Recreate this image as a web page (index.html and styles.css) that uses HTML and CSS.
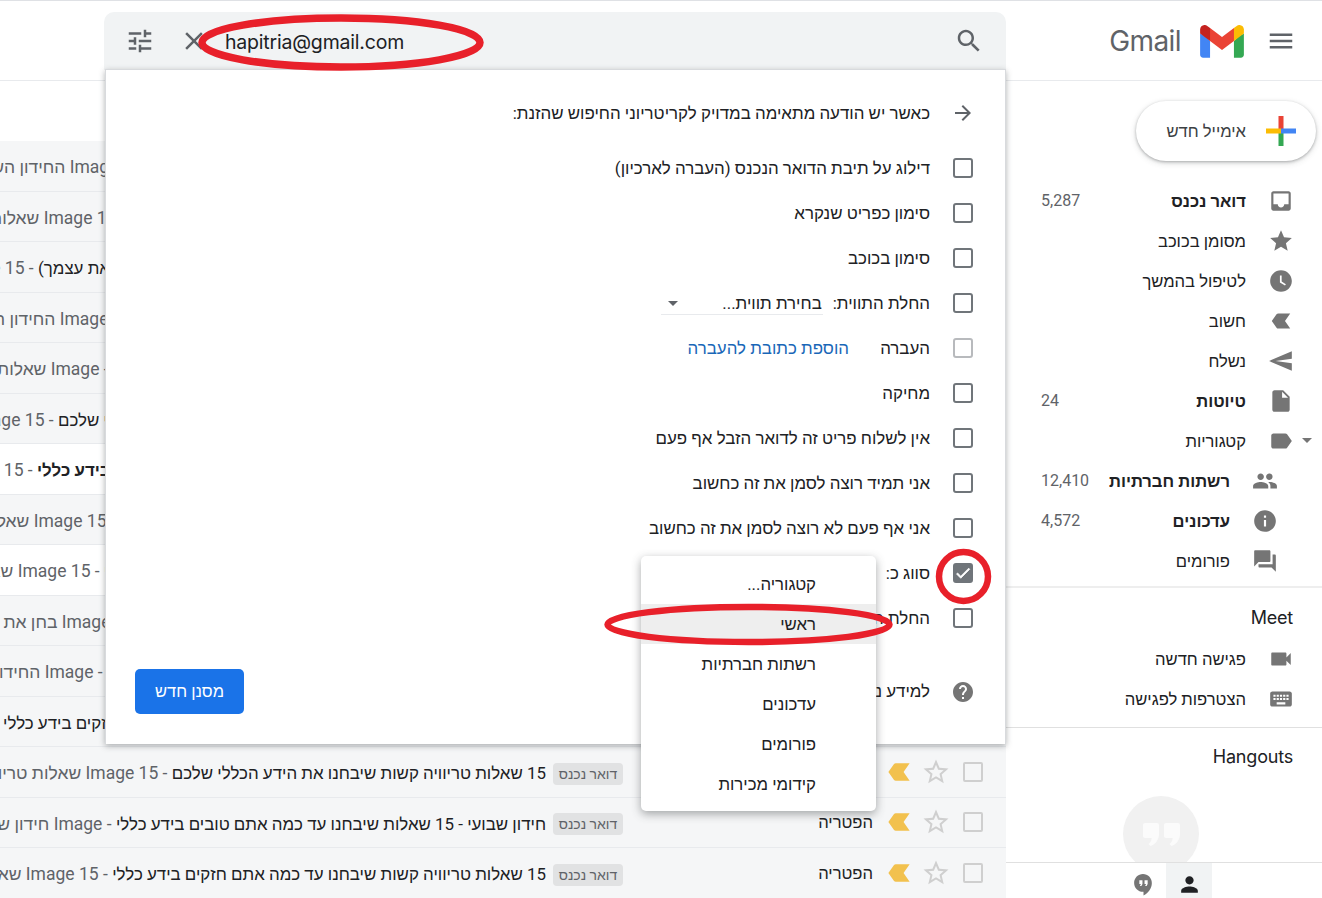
FILE: index.html
```html
<!DOCTYPE html>
<html lang="he" dir="rtl">
<head>
<meta charset="utf-8">
<title>Gmail</title>
<link rel="stylesheet" href="styles.css">
</head>
<body>
<svg class="sprite" xmlns="http://www.w3.org/2000/svg">
  <symbol id="i-star" viewBox="0 0 24 24"><path d="M12 17.27L18.18 21l-1.64-7.03L22 9.24l-7.19-.61L12 2 9.19 8.63 2 9.24l5.46 4.73L5.82 21z"/></symbol>
  <symbol id="i-star-o" viewBox="0 0 24 24"><path d="M22 9.24l-7.19-.62L12 2 9.19 8.63 2 9.24l5.46 4.73L5.82 21 12 17.27 18.18 21l-1.63-7.03L22 9.24zM12 15.4l-3.76 2.27 1-4.28-3.32-2.88 4.38-.38L12 6.1l1.71 4.04 4.38.38-3.32 2.88 1 4.28L12 15.4z"/></symbol>
  <symbol id="i-imp" viewBox="0 0 24 24"><path transform="matrix(-1 0 0 1 24 0)" d="M3.5 18.99l11 .01c.67 0 1.27-.33 1.63-.84L20.5 12l-4.37-6.16c-.36-.51-.96-.84-1.63-.84l-11 .01L8.34 12 3.5 18.99z"/></symbol>
</svg>

<div class="app">
  <header class="header">
    <div class="brand">
      <svg class="icon burger" viewBox="0 0 24 24"><path d="M3 18h18v-2H3v2zm0-5h18v-2H3v2zm0-7v2h18V6H3z"/></svg>
      <svg class="gmail-m" viewBox="0 0 256 193">
        <path fill="#4285f4" d="M58.18 192.05V93.14L27.5 65.08 0 49.51v125.09c0 9.66 7.83 17.45 17.45 17.45h40.73z"/>
        <path fill="#34a853" d="M197.82 192.05h40.73c9.66 0 17.45-7.83 17.45-17.45V49.51l-31.16 17.84-27.02 25.79v98.91z"/>
        <path fill="#ea4335" d="M58.18 93.14l-4.17-38.65 4.17-36.99L128 69.87l69.82-52.36 4.67 34.99-4.67 40.64L128 145.5z"/>
        <path fill="#fbbc04" d="M197.82 17.51V93.14L256 49.51V26.18c0-21.59-24.64-33.89-41.89-20.95l-16.29 12.28z"/>
        <path fill="#c5221f" d="M0 49.51l26.76 20.07L58.18 93.14V17.51L41.89 5.23C24.61-7.71 0 4.59 0 26.18v23.33z"/>
      </svg>
      <span class="wordmark" dir="ltr">Gmail</span>
    </div>
    <div class="search">
      <svg class="icon search-ic" viewBox="0 0 24 24"><path d="M15.5 14h-.79l-.28-.27C15.41 12.59 16 11.11 16 9.5 16 5.91 13.09 3 9.5 3S3 5.91 3 9.5 5.91 16 9.5 16c1.61 0 3.09-.59 4.23-1.57l.27.28v.79l5 4.99L20.49 19l-4.99-5zm-6 0C7.01 14 5 11.99 5 9.5S7.01 5 9.5 5 14 7.01 14 9.5 11.99 14 9.5 14z"/></svg>
      <span class="query" dir="ltr">hapitria@gmail.com</span>
      <svg class="icon close-ic" viewBox="0 0 24 24"><path d="M19 6.41L17.59 5 12 10.59 6.41 5 5 6.41 10.59 12 5 17.59 6.41 19 12 13.41 17.59 19 19 17.59 13.41 12z"/></svg>
      <svg class="icon tune-ic" viewBox="0 0 24 24"><path d="M3 17v2h6v-2H3zM3 5v2h10V5H3zm10 16v-2h8v-2h-8v-2h-2v6h2zM7 9v2H3v2h4v2h2V9H7zm14 4v-2H11v2h10zm-6-4h2V7h4V5h-4V3h-2v6z"/></svg>
    </div>
  </header>

  <div class="content">
    <aside class="sidebar">
      <button class="compose">
        <svg class="plus" viewBox="0 0 30 30">
          <rect x="12.5" y="0" width="5" height="15" fill="#ea4335"/>
          <rect x="12.5" y="15" width="5" height="15" fill="#34a853"/>
          <rect x="0" y="12.5" width="15" height="5" fill="#fbbc04"/>
          <rect x="15" y="12.5" width="15" height="5" fill="#4285f4"/>
        </svg>
        <span class="compose-label">אימייל חדש</span>
      </button>
      <nav class="nav">
        <a class="item strong"><svg class="icon" viewBox="0 0 24 24"><path d="M19 3H5c-1.1 0-2 .9-2 2v14c0 1.1.9 2 2 2h14c1.1 0 2-.9 2-2V5c0-1.1-.9-2-2-2zm0 12h-4c0 1.66-1.35 3-3 3s-3-1.34-3-3H5V5h14v10z"/></svg><span class="label">דואר נכנס</span><span class="count">5,287</span></a>
        <a class="item"><svg class="icon"><use href="#i-star"/></svg><span class="label">מסומן בכוכב</span></a>
        <a class="item"><svg class="icon" viewBox="0 0 24 24"><path d="M11.99 2C6.47 2 2 6.48 2 12s4.47 10 9.99 10C17.52 22 22 17.52 22 12S17.52 2 11.99 2zm3.7 14.2L11 13.4V7h1.6v5.5l3.9 2.4-.8 1.3z"/></svg><span class="label">לטיפול בהמשך</span></a>
        <a class="item"><svg class="icon"><use href="#i-imp"/></svg><span class="label">חשוב</span></a>
        <a class="item"><svg class="icon" viewBox="0 0 24 24"><path transform="matrix(-1 0 0 1 24 0)" d="M2.01 21L23 12 2.01 3 2 10l15 2-15 2z"/></svg><span class="label">נשלח</span></a>
        <a class="item strong"><svg class="icon" viewBox="0 0 24 24"><path d="M6 2c-1.1 0-1.99.9-1.99 2L4 20c0 1.1.89 2 1.99 2H18c1.1 0 2-.9 2-2V8l-6-6H6zm7 7V3.5L18.5 9H13z"/></svg><span class="label">טיוטות</span><span class="count">24</span></a>
        <a class="item"><span class="caret nav-caret"></span><svg class="icon" viewBox="0 0 24 24"><path d="M17.63 5.84C17.27 5.33 16.67 5 16 5L5 5.01C3.9 5.01 3 5.9 3 7v10c0 1.1.9 1.99 2 1.99L16 19c.67 0 1.27-.33 1.63-.84L22 12l-4.37-6.16z"/></svg><span class="label">קטגוריות</span></a>
        <a class="item sub strong"><svg class="icon" viewBox="0 0 24 24"><path d="M16 11c1.66 0 2.99-1.34 2.99-3S17.66 5 16 5c-1.66 0-3 1.34-3 3s1.34 3 3 3zm-8 0c1.66 0 2.99-1.34 2.99-3S9.66 5 8 5C6.34 5 5 6.34 5 8s1.34 3 3 3zm0 2c-2.33 0-7 1.17-7 3.5V19h14v-2.5c0-2.33-4.67-3.5-7-3.5zm8 0c-.29 0-.62.02-.97.05 1.16.84 1.97 1.97 1.97 3.45V19h6v-2.5c0-2.33-4.67-3.5-7-3.5z"/></svg><span class="label">רשתות חברתיות</span><span class="count">12,410</span></a>
        <a class="item sub strong"><svg class="icon" viewBox="0 0 24 24"><path d="M12 2C6.48 2 2 6.48 2 12s4.48 10 10 10 10-4.48 10-10S17.52 2 12 2zm1 15h-2v-6h2v6zm0-8h-2V7h2v2z"/></svg><span class="label">עדכונים</span><span class="count">4,572</span></a>
        <a class="item sub"><svg class="icon" viewBox="0 0 24 24"><path d="M21 6h-2v9H6v2c0 .55.45 1 1 1h11l4 4V7c0-.55-.45-1-1-1zm-4 6V3c0-.55-.45-1-1-1H3c-.55 0-1 .45-1 1v14l4-4h10c.55 0 1-.45 1-1z"/></svg><span class="label">פורומים</span></a>
      </nav>
      <section class="meet">
        <h2 class="side-title" dir="ltr">Meet</h2>
        <a class="item"><svg class="icon" viewBox="0 0 24 24"><path d="M17 10.5V7c0-.55-.45-1-1-1H4c-.55 0-1 .45-1 1v10c0 .55.45 1 1 1h12c.55 0 1-.45 1-1v-3.5l4 4v-11l-4 4z"/></svg><span class="label">פגישה חדשה</span></a>
        <a class="item"><svg class="icon" viewBox="0 0 24 24"><path d="M20 5H4c-1.1 0-1.99.9-1.99 2L2 17c0 1.1.9 2 2 2h16c1.1 0 2-.9 2-2V7c0-1.1-.9-2-2-2zm-9 3h2v2h-2V8zm0 3h2v2h-2v-2zM8 8h2v2H8V8zm0 3h2v2H8v-2zm-1 2H5v-2h2v2zm0-3H5V8h2v2zm9 7H8v-2h8v2zm0-4h-2v-2h2v2zm0-3h-2V8h2v2zm3 3h-2v-2h2v2zm0-3h-2V8h2v2z"/></svg><span class="label">הצטרפות לפגישה</span></a>
      </section>
      <section class="hangouts">
        <h2 class="side-title" dir="ltr">Hangouts</h2>
        <div class="avatar-wrap">
          <div class="avatar">
            <svg class="avatar-q" viewBox="0 0 37 23"><path d="M2 0h12c1.1 0 2 .9 2 2v9c0 5.5-3.5 10.5-8.5 12l-2-2c2-1.5 3-3.5 3.2-6H2c-1.1 0-2-.9-2-2V2C0 .9.9 0 2 0zM23 0h12c1.1 0 2 .9 2 2v9c0 5.5-3.5 10.5-8.5 12l-2-2c2-1.5 3-3.5 3.2-6H23c-1.1 0-2-.9-2-2V2c0-1.1.9-2 2-2z"/></svg>
          </div>
        </div>
      </section>
      <footer class="side-foot">
        <span class="tab active"><svg class="icon" viewBox="0 0 24 24"><path d="M12 12c2.21 0 4-1.79 4-4s-1.79-4-4-4-4 1.79-4 4 1.79 4 4 4zm0 2c-2.67 0-8 1.34-8 4v2h16v-2c0-2.66-5.33-4-8-4z"/></svg></span>
        <span class="tab"><svg class="icon" viewBox="0 0 24 24"><path d="M11.5 2C6.8 2 3 5.8 3 10.5S6.8 19 11.5 19H12v3.5c4.86-2.34 8-7 8-12C20 5.8 16.2 2 11.5 2zM11 11.5l-1 2H8.5l1-2H8V8h3v3.5zm5 0l-1 2h-1.5l1-2H13V8h3v3.5z"/></svg></span>
      </footer>
    </aside>

    <main class="main">
      <div class="toolbar"></div>
      <div class="list">
        <div class="row"><span class="box"></span><svg class="star"><use href="#i-star-o"/></svg><svg class="imp"><use href="#i-imp"/></svg><span class="sender">הפטריה</span><span class="tag">דואר נכנס</span><span class="text"><span class="subj sw-414">החידון השבועי - 15 שאלות שיבחנו עד כמה אתם טובים</span><span class="snip"> - Image החידון השבועי</span></span></div>
        <div class="row"><span class="box"></span><svg class="star"><use href="#i-star-o"/></svg><svg class="imp"><use href="#i-imp"/></svg><span class="sender">הפטריה</span><span class="tag">דואר נכנס</span><span class="text"><span class="subj sw-416">15 שאלות טריוויה קשות שיבחנו את הידע הכללי שלכם</span><span class="snip"> - Image 15 שאלות טריוויה</span></span></div>
        <div class="row"><span class="box"></span><svg class="star"><use href="#i-star-o"/></svg><svg class="imp"><use href="#i-imp"/></svg><span class="sender">הפטריה</span><span class="tag">דואר נכנס</span><span class="text"><span class="subj sw-508">החידון השבועי - 15 שאלות שיבחנו (בחן את עצמך)</span><span class="snip"> - Image 15</span></span></div>
        <div class="row"><span class="box"></span><svg class="star"><use href="#i-star-o"/></svg><svg class="imp"><use href="#i-imp"/></svg><span class="sender">הפטריה</span><span class="tag">דואר נכנס</span><span class="text"><span class="subj sw-424">החידון השבועי - 15 שאלות שיבחנו עד כמה אתם חזקים</span><span class="snip"> - Image החידון השבועי</span></span></div>
        <div class="row"><span class="box"></span><svg class="star"><use href="#i-star-o"/></svg><svg class="imp"><use href="#i-imp"/></svg><span class="sender">הפטריה</span><span class="tag">דואר נכנס</span><span class="text"><span class="subj sw-433">15 שאלות טריוויה קשות שיבחנו את הידע הכללי שלכם</span><span class="snip"> - Image שאלות טריוויה</span></span></div>
        <div class="row"><span class="box"></span><svg class="star"><use href="#i-star-o"/></svg><svg class="imp"><use href="#i-imp"/></svg><span class="sender">הפטריה</span><span class="tag">דואר נכנס</span><span class="text"><span class="subj sw-488">15 שאלות טריוויה קשות שיבחנו את הידע הכללי שלכם</span><span class="snip"> - Image 15</span></span></div>
        <div class="row unread"><span class="box"></span><svg class="star"><use href="#i-star-o"/></svg><svg class="imp"><use href="#i-imp"/></svg><span class="sender">הפטריה</span><span class="tag">דואר נכנס</span><span class="text"><span class="subj sw-509">15 שאלות טריוויה שיבחנו עד כמה אתם חזקים בידע כללי</span><span class="snip"> - Image 15</span></span></div>
        <div class="row"><span class="box"></span><svg class="star"><use href="#i-star-o"/></svg><svg class="imp"><use href="#i-imp"/></svg><span class="sender">הפטריה</span><span class="tag">דואר נכנס</span><span class="text"><span class="subj sw-426">חידון שבועי - 15 שאלות שיבחנו עד כמה אתם חזקים</span><span class="snip"> - Image 15 שאלות טריוויה</span></span></div>
        <div class="row plain"><span class="box"></span><svg class="star"><use href="#i-star-o"/></svg><svg class="imp"><use href="#i-imp"/></svg><span class="sender">הפטריה</span><span class="tag">דואר נכנס</span><span class="text"><span class="subj sw-442">15 שאלות טריוויה שיבחנו עד כמה אתם טובים בידע כללי</span><span class="snip"> - Image 15 שאלות</span></span></div>
        <div class="row"><span class="box"></span><svg class="star"><use href="#i-star-o"/></svg><svg class="imp"><use href="#i-imp"/></svg><span class="sender">הפטריה</span><span class="tag">דואר נכנס</span><span class="text"><span class="subj sw-422">בחן את עצמך - 15 שאלות טריוויה בידע כללי לכל המשפחה</span><span class="snip"> - Image בחן את עצמך</span></span></div>
        <div class="row"><span class="box"></span><svg class="star"><use href="#i-star-o"/></svg><svg class="imp"><use href="#i-imp"/></svg><span class="sender">הפטריה</span><span class="tag">דואר נכנס</span><span class="text"><span class="subj sw-439">החידון השבועי - 15 שאלות שיבחנו כמה אתם טובים בכללי</span><span class="snip"> - Image החידון השבועי</span></span></div>
        <div class="row"><span class="box"></span><svg class="star"><use href="#i-star-o"/></svg><svg class="imp"><use href="#i-imp"/></svg><span class="sender">הפטריה</span><span class="tag">דואר נכנס</span><span class="text"><span class="subj sw-543">15 שאלות טריוויה קשות שיבחנו עד כמה אתם חזקים בידע כללי</span><span class="snip"> - Image 15</span></span></div>
        <div class="row"><span class="box"></span><svg class="star"><use href="#i-star-o"/></svg><svg class="imp"><use href="#i-imp"/></svg><span class="sender">הפטריה</span><span class="tag">דואר נכנס</span><span class="text"><span class="subj">15 שאלות טריוויה קשות שיבחנו את הידע הכללי שלכם</span><span class="snip"> - Image 15 שאלות טריוויה</span></span></div>
        <div class="row"><span class="box"></span><svg class="star"><use href="#i-star-o"/></svg><svg class="imp"><use href="#i-imp"/></svg><span class="sender">הפטריה</span><span class="tag">דואר נכנס</span><span class="text"><span class="subj">חידון שבועי - 15 שאלות שיבחנו עד כמה אתם טובים בידע כללי</span><span class="snip"> - Image חידון שבועי</span></span></div>
        <div class="row"><span class="box"></span><svg class="star"><use href="#i-star-o"/></svg><svg class="imp"><use href="#i-imp"/></svg><span class="sender">הפטריה</span><span class="tag">דואר נכנס</span><span class="text"><span class="subj">15 שאלות טריוויה קשות שיבחנו עד כמה אתם חזקים בידע כללי</span><span class="snip"> - Image 15 שאלות טריוויה</span></span></div>
      </div>
    </main>
  </div>

  <section class="dialog">
    <div class="d-row d-head">
      <svg class="icon" viewBox="0 0 24 24"><path d="M12 4l-1.41 1.41L16.17 11H4v2h12.17l-5.58 5.59L12 20l8-8z"/></svg>
      <span>כאשר יש הודעה מתאימה במדויק לקריטריוני החיפוש שהזנת:</span>
    </div>
    <div class="d-row"><span class="cb"></span><span>דילוג על תיבת הדואר הנכנס (העברה לארכיון)</span></div>
    <div class="d-row"><span class="cb"></span><span>סימון כפריט שנקרא</span></div>
    <div class="d-row"><span class="cb"></span><span>סימון בכוכב</span></div>
    <div class="d-row"><span class="cb"></span><span class="d-label">החלת התווית:</span><span class="select"><span>בחירת תווית...</span><span class="caret"></span></span></div>
    <div class="d-row"><span class="cb off"></span><span class="d-label fixed">העברה</span><a class="link">הוספת כתובת להעברה</a></div>
    <div class="d-row"><span class="cb"></span><span>מחיקה</span></div>
    <div class="d-row"><span class="cb"></span><span>אין לשלוח פריט זה לדואר הזבל אף פעם</span></div>
    <div class="d-row"><span class="cb"></span><span>אני תמיד רוצה לסמן את זה כחשוב</span></div>
    <div class="d-row"><span class="cb"></span><span>אני אף פעם לא רוצה לסמן את זה כחשוב</span></div>
    <div class="d-row"><span class="cb on"><svg viewBox="0 0 24 24"><path d="M9 16.2L4.8 12l-1.4 1.4L9 19 21 7l-1.4-1.4z"/></svg></span><span>סווג כ:</span></div>
    <div class="d-row"><span class="cb"></span><span>החלת המסנן גם על שיחות תואמות</span></div>
    <div class="d-row d-foot">
      <svg class="icon" viewBox="0 0 24 24"><path d="M12 2C6.48 2 2 6.48 2 12s4.48 10 10 10 10-4.48 10-10S17.52 2 12 2zm1 17h-2v-2h2v2zm2.07-7.75l-.9.92C13.45 12.9 13 13.5 13 15h-2v-.5c0-1.1.45-2.1 1.17-2.83l1.24-1.26c.37-.36.59-.86.59-1.41 0-1.1-.9-2-2-2s-2 .9-2 2H8c0-2.21 1.79-4 4-4s4 1.79 4 4c0 .88-.36 1.68-.93 2.25z"/></svg>
      <span>למידע נוסף</span>
      <button class="primary">מסנן חדש</button>
    </div>
  </section>

  <ul class="menu">
    <li>קטגוריה...</li>
    <li class="hover">ראשי</li>
    <li>רשתות חברתיות</li>
    <li>עדכונים</li>
    <li>פורומים</li>
    <li>קידומי מכירות</li>
  </ul>

  <svg class="marks" viewBox="0 0 1322 898">
    <ellipse class="mark-wide" cx="341" cy="42.5" rx="139" ry="24.5"/>
    <circle cx="963.5" cy="576.5" r="24.5"/>
    <ellipse cx="748.5" cy="624.5" rx="141" ry="17.5"/>
  </svg>
</div>
</body>
</html>
```

FILE: styles.css
```css
* { box-sizing: border-box; }
html, body { margin: 0; padding: 0; }
body {
  width: 1322px;
  height: 898px;
  overflow: hidden;
  background: #fff;
  color: #202124;
  font-family: Roboto, "Liberation Sans", sans-serif;
  font-size: 16.9px;
}
.sprite { position: absolute; width: 0; height: 0; }
.app { position: relative; width: 1322px; height: 898px; overflow: hidden; display: flex; flex-direction: column; }

.icon { width: 26px; height: 26px; margin: 2px; fill: #757575; flex: none; display: block; }

/* header */
.header {
  height: 81px;
  flex: none;
  display: flex;
  align-items: flex-start;
  border-top: 1px solid #dfe1e5;
  border-bottom: 1px solid #e8eaed;
}
.brand {
  width: 316px;
  flex: none;
  height: 79px;
  display: flex;
  align-items: center;
  padding-right: 26px;
}
.burger { fill: #5f6368; width: 30px; height: 30px; margin: 0; }
.gmail-m { width: 44px; height: 33px; margin: 2px 22px 0 0; flex: none; }
.wordmark { font-family: Inter, Roboto, sans-serif; font-size: 28px; color: #5f6368; margin-right: 19px; letter-spacing: -0.6px; }

.search {
  width: 902px;
  height: 58px;
  margin-top: 11px;
  flex: none;
  background: #f1f3f4;
  border-radius: 10px 10px 0 0;
  display: flex;
  align-items: center;
  padding-right: 22px;
}
.search .icon { fill: #5f6368; width: 30px; height: 30px; margin: 0; }
.query { font-size: 19.5px; margin: 2px auto 0 10px; font-family: Inter, Roboto, sans-serif; letter-spacing: -0.2px; }
.search .close-ic { margin-right: 6px; }
.search .tune-ic { margin: 0 24px 0 21px; }

/* content */
.content { flex: 1; display: flex; min-height: 0; }
.sidebar { width: 316px; flex: none; display: flex; flex-direction: column; padding-top: 20px; font-size: 16.6px; }
.main { flex: 1; min-width: 0; }
.toolbar { height: 60px; }

/* sidebar */
.compose {
  width: 180px;
  height: 60px;
  margin-right: 6px;
  border: 0;
  border-radius: 30px;
  background: #fff;
  box-shadow: 0 1px 3px rgba(60,64,67,.35), 0 2px 6px rgba(60,64,67,.18);
  display: flex;
  align-items: center;
  padding: 0 20px 0 0;
  font: inherit;
  color: #3c4043;
  gap: 20px;
  flex: none;
}
.compose-label { padding-top: 2px; }
.plus { width: 30px; height: 30px; flex: none; }
.nav { margin-top: 20px; padding-bottom: 5px; border-bottom: 2px solid #eeeeee; height: 407px; flex: none; }
.item { position: relative; height: 40px; display: flex; align-items: center; padding: 0 26px 0 35px; color: #202124; }
.item .label { margin-right: 20px; padding-top: 2px; }
.item.sub { padding-right: 42px; }
.item.strong .label { font-weight: 700; }
.count { margin-right: auto; color: #5f6368; font-size: 16px; margin-top: -2px; }
.caret { width: 0; height: 0; border-style: solid; border-width: 5px 5px 0 5px; border-color: #5f6368 transparent transparent transparent; flex: none; }
.nav-caret { position: absolute; right: 10px; top: 17px; border-color: #757575 transparent transparent transparent; }
.meet { flex: none; padding-top: 13px; border-bottom: 1px solid #e0e0e0; height: 140px; }
.side-title { margin: 0; font-size: 18px; font-weight: 400; font-family: Inter, Roboto, sans-serif; letter-spacing: -0.2px; height: 38px; line-height: 34px; padding-right: 29px; text-align: right; }
.hangouts { flex: 1; padding-top: 12px; min-height: 0; display: flex; flex-direction: column; }
.avatar-wrap { flex: 1; min-height: 0; overflow: hidden; padding-right: 123px; padding-top: 18px; }
.avatar { width: 76px; height: 76px; border-radius: 50%; background: #f1f1f1; display: flex; align-items: center; justify-content: center; padding-top: 1px; }
.avatar-q { width: 37px; height: 23px; fill: #fbfbfb; }
.side-foot { height: 36px; flex: none; border-top: 1px solid #e0e0e0; display: flex; padding-right: 110px; }
.tab { width: 46px; display: flex; align-items: center; justify-content: center; padding-top: 8px; }
.tab .icon { width: 25px; height: 25px; margin: 0; }
.tab.active { background: #f1f3f4; }
.tab.active .icon { fill: #202124; }

/* list */
.list { display: grid; grid-auto-rows: 50.5px; }
.row {
  display: flex;
  align-items: center;
  padding-right: 23px;
  background: #f5f6f7;
  border-bottom: 1px solid #e8eaed;
  white-space: nowrap;
}
.row.unread, .row.plain { background: #fff; }
.row.unread .subj { font-weight: 700; }
.box { width: 20px; height: 20px; border: 2px solid #cfcfcf; border-radius: 2px; flex: none; }
.star { width: 30px; height: 30px; fill: #cfcfcf; margin-right: 12px; flex: none; }
.imp { width: 30px; height: 30px; fill: #f2c14e; margin-right: 7px; flex: none; }
.sender { width: 250px; margin: 2px 11px 0 0; flex: none; font-size: 16.6px; }
.tag { width: 70px; height: 22px; margin-top: 4px; flex: none; background: #e1e2e3; color: #5f6368; font-size: 14px; line-height: 22px; text-align: center; border-radius: 4px; }
.text { flex: 1; min-width: 0; overflow: hidden; margin: 4px 7px 0 0; }
.subj { display: inline-block; text-align: left; }
.sw-414 { width: 414px; }
.sw-416 { width: 416px; }
.sw-422 { width: 422px; }
.sw-424 { width: 424px; }
.sw-426 { width: 426px; }
.sw-433 { width: 433px; }
.sw-439 { width: 439px; }
.sw-442 { width: 442px; }
.sw-488 { width: 488px; }
.sw-508 { width: 508px; }
.sw-509 { width: 509px; }
.sw-543 { width: 543px; }
.snip { color: #5f6368; font-size: 17.5px; }

/* dialog */
.dialog {
  position: absolute;
  top: 69px;
  left: 105px;
  width: 901px;
  height: 675px;
  background: #fff;
  border: 1px solid #d8dadd;
  border-bottom: 0;
  box-shadow: 0 2px 6px rgba(60,64,67,.4);
  padding: 21px 32px 0 29px;
}
.d-row { height: 45px; display: flex; align-items: center; gap: 23px; white-space: nowrap; }
.d-head { margin-bottom: 10px; }
.d-head .icon { fill: #5f6368; width: 24px; height: 24px; margin: -2px -2px 0; }
.cb { width: 20px; height: 20px; border: 2px solid #70757a; border-radius: 3px; flex: none; display: block; margin-top: -2px; }
.cb.off { border-color: #b8babd; }
.cb.on { background: #70757a; }
.cb.on svg { display: block; width: 18px; height: 18px; margin: -1px; fill: #fff; stroke: #fff; stroke-width: 1; }
.d-label { margin-left: -13px; }
.d-label.fixed { width: 81px; margin-left: -23px; }
.select { width: 162px; height: 22px; border-bottom: 1px solid #e8eaed; display: flex; align-items: center; justify-content: space-between; padding: 0 1px 0 7px; }
.link { color: #1967b8; }
.d-foot { margin-top: 28px; }
.d-foot .icon { width: 24px; height: 24px; margin: 0 -2px; }
.primary {
  margin-right: auto;
  width: 109px;
  height: 45px;
  border: 0;
  border-radius: 5px;
  background: #1a73e8;
  color: #fff;
  font: inherit;
  font-size: 16.5px;
  font-weight: 500;
}

/* menu */
.menu {
  position: absolute;
  top: 556px;
  left: 641px;
  width: 235px;
  margin: 0;
  padding: 8px 0 7px;
  list-style: none;
  background: #fff;
  border-radius: 5px;
  box-shadow: 0 3px 10px rgba(60,64,67,.45);
  font-size: 16.8px;
}
.menu li { height: 40px; line-height: 40px; padding-right: 60px; }
.menu li.hover { background: #eeeeee; }

/* annotation marks */
.marks { position: absolute; inset: 0; width: 1322px; height: 898px; pointer-events: none; fill: none; stroke: #e8202a; stroke-width: 6.5; }
.marks .mark-wide { stroke-width: 7.5; }
```
